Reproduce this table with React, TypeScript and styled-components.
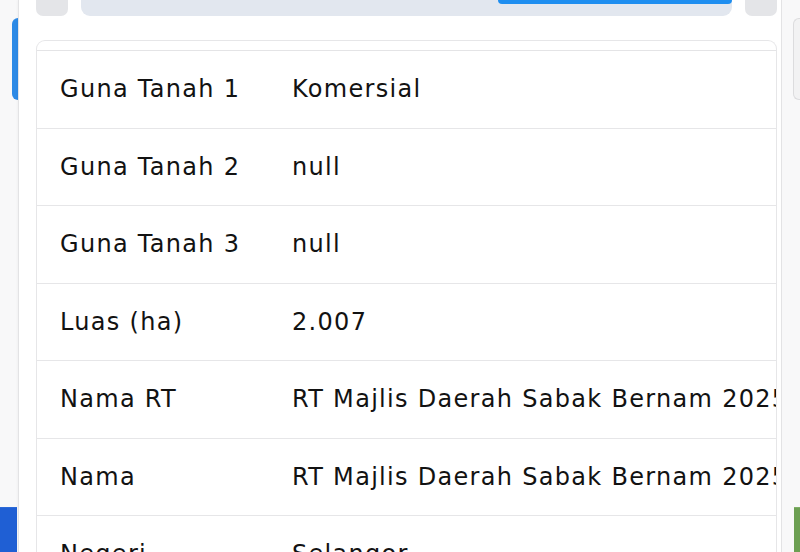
import styled, { createGlobalStyle } from "styled-components";

const GlobalStyle = createGlobalStyle`
  html, body {
    margin: 0;
    padding: 0;
    height: 100%;
    overflow: hidden;
    background: #f7f7f8;
    font-family: "DejaVu Sans", "Open Sans", sans-serif;
  }
  #root {
    height: 100%;
  }
`;

const Screen = styled.div`
  display: grid;
  grid-template-columns: 18px 1fr 18px;
  height: 552px;
  overflow: hidden;
`;

const Gutter = styled.div`
  display: flex;
  flex-direction: column;
  justify-content: space-between;
  align-items: flex-end;
  background: #f8f8f9;
`;

const SideTab = styled.div<{ $side: "left" | "right" }>`
  margin-top: 18px;
  height: 82px;
  width: ${(p) => (p.$side === "left" ? "6px" : "7px")};
  background: ${(p) => (p.$side === "left" ? "#2d8ae6" : "#f2f2f3")};
  border: ${(p) => (p.$side === "left" ? "none" : "1px solid #dcdcde")};
  border-right: none;
  border-radius: 6px 0 0 6px;
  box-sizing: border-box;
`;

const SideFoot = styled.div<{ $side: "left" | "right" }>`
  height: 44px;
  width: ${(p) => (p.$side === "left" ? "17px" : "6px")};
  align-self: flex-${(p) => (p.$side === "left" ? "start" : "end")};
  background: ${(p) => (p.$side === "left" ? "#1f5fd4" : "#6c9f52")};
  border-top: 1px solid ${(p) => (p.$side === "left" ? "#2c6ad8" : "#7fae66")};
`;

const Panel = styled.div`
  background: #ffffff;
  border-left: 1px solid #e3e3e5;
  border-right: 1px solid #e3e3e5;
  box-shadow: 0 0 3px rgba(0, 0, 0, 0.06);
  padding: 0 4px 0 17px;
  display: flex;
  flex-direction: column;
  overflow: hidden;
`;

const TopBar = styled.div`
  display: flex;
  gap: 13px;
  height: 16px;
  flex-shrink: 0;
`;

const TopButton = styled.div`
  width: 32px;
  background: #e4e5e8;
  border-radius: 0 0 7px 7px;
`;

const Track = styled.div`
  flex: 1;
  background: #e2e7ef;
  border-radius: 0 0 9px 9px;
  display: flex;
  justify-content: flex-end;
  align-items: flex-start;
  overflow: hidden;
`;

const Progress = styled.div`
  height: 4px;
  background: #1e8ef0;
  border-radius: 0 0 4px 4px;
`;

const Card = styled.div`
  margin-top: 24px;
  border: 1px solid #e6e6e8;
  border-bottom: none;
  border-radius: 9px 9px 0 0;
  padding-top: 9px;
  overflow: hidden;
`;

const Table = styled.div`
  border-top: 1px solid #e4e4e6;
  display: flex;
  flex-direction: column;
`;

const Row = styled.div`
  display: grid;
  grid-template-columns: 232px 1fr;
  height: 77.5px;
  align-items: center;
  border-bottom: 1px solid #e6e6e8;
  box-sizing: border-box;
  padding-left: 23px;
  font-size: 24px;
  letter-spacing: 1.3px;
  color: #121212;
  white-space: nowrap;
`;

const Label = styled.span``;

const Value = styled.span`
  overflow: hidden;
`;

const rows: [string, string][] = [
  ["Guna Tanah 1", "Komersial"],
  ["Guna Tanah 2", "null"],
  ["Guna Tanah 3", "null"],
  ["Luas (ha)", "2.007"],
  ["Nama RT", "RT Majlis Daerah Sabak Bernam 2025"],
  ["Nama", "RT Majlis Daerah Sabak Bernam 2025"],
  ["Negeri", "Selangor"],
];

export default function App() {
  return (
    <>
      <GlobalStyle />
      <Screen>
        <Gutter>
          <SideTab $side="left" />
          <SideFoot $side="left" />
        </Gutter>
        <Panel>
          <TopBar>
            <TopButton />
            <Track>
              <Progress style={{ width: "36%" }} />
            </Track>
            <TopButton />
          </TopBar>
          <Card>
            <Table>
              {rows.map(([k, v]) => (
                <Row key={k}>
                  <Label>{k}</Label>
                  <Value>{v}</Value>
                </Row>
              ))}
            </Table>
          </Card>
        </Panel>
        <Gutter>
          <SideTab $side="right" />
          <SideFoot $side="right" />
        </Gutter>
      </Screen>
    </>
  );
}
